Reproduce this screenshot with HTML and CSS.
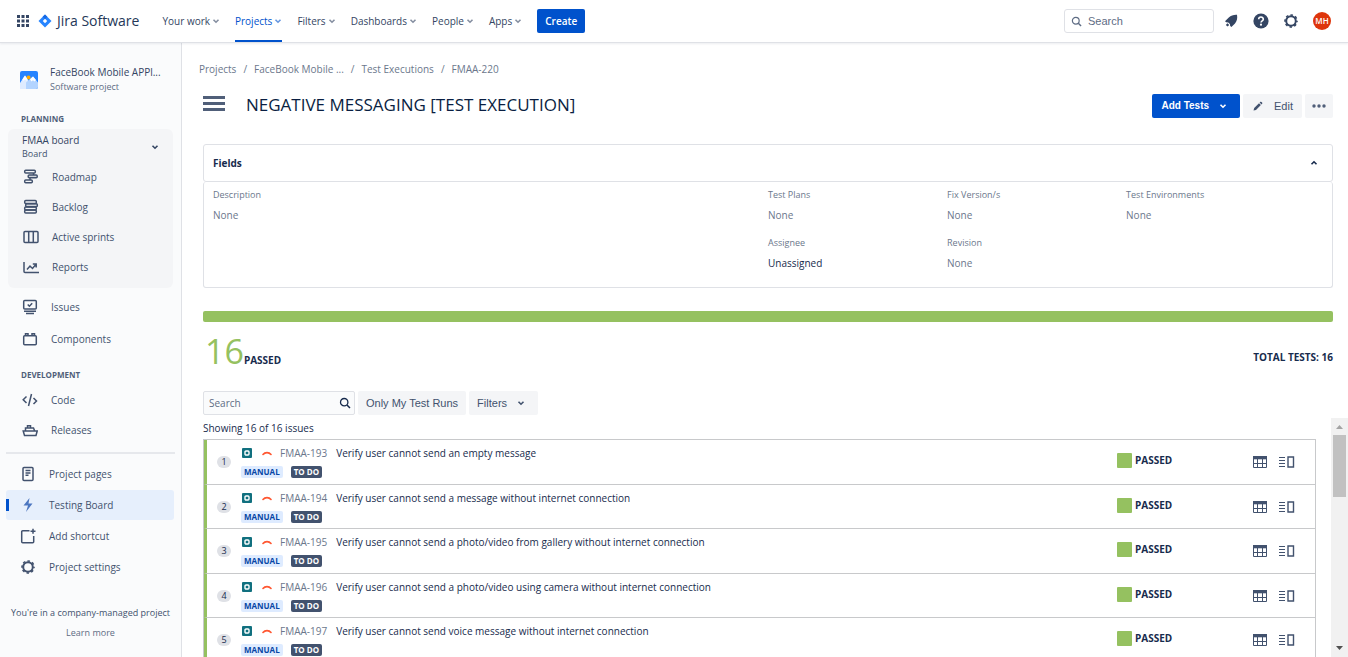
FILE: index.html
```
<!DOCTYPE html>
<html lang="en">
<head>
<meta charset="utf-8">
<title>NEGATIVE MESSAGING [TEST EXECUTION] - Jira Software</title>
<link rel="stylesheet" href="styles.css">
</head>
<body>
<svg class="sprite" aria-hidden="true">
  <symbol id="chev" viewBox="0 0 8 8"><path d="M1.500 2.700 4 5.200l2.500-2.500" fill="none" stroke="currentColor" stroke-width="1.600"/></symbol>
  <symbol id="gear" viewBox="0 0 16 16"><circle cx="8" cy="8" r="4.800" fill="none" stroke="currentColor" stroke-width="2"/><circle cx="8" cy="8" r="6" fill="none" stroke="currentColor" stroke-width="1.600" stroke-dasharray="2.500 2.210" stroke-dashoffset="1.250"/></symbol>
  <symbol id="lens" viewBox="0 0 12 12"><circle cx="5.200" cy="5.200" r="3.700" fill="none" stroke="currentColor" stroke-width="1.300"/><path d="m8 8 3 3" stroke="currentColor" stroke-width="1.500"/></symbol>
  <symbol id="test" viewBox="0 0 10 10"><rect width="10" height="10" rx="1" fill="#11707f"/><rect x="3" y="3" width="4" height="4" rx="1" fill="none" stroke="#fff" stroke-width="1.400"/></symbol>
  <symbol id="prio" viewBox="0 0 10 6"><path d="M1 4.500C3 2 7 2 9 4.500" fill="none" stroke="#ff5630" stroke-width="1.600" stroke-linecap="round"/></symbol>
  <symbol id="grid" viewBox="0 0 16 12"><path d="M1 0h14v4H1z" fill="currentColor"/><path d="M1.500 .5h13v11h-13zM1 7.500h14M5.500 3v8M10.500 3v8" fill="none" stroke="currentColor"/><path d="M2 3.500h3M6 3.500h4M11 3.500h3" stroke="#fff" stroke-opacity=".7"/></symbol>
  <symbol id="detail" viewBox="0 0 16 12"><path d="M0 1.500h6M0 4.500h6M0 7.500h6M0 10.500h6" stroke="currentColor" stroke-width="1.200"/><path d="M9 1h5.500v10H9z" fill="none" stroke="currentColor" stroke-width="1.400"/></symbol>
</svg>

<header class="topbar">
  <button class="icon-btn" aria-label="Switch to"><svg width="14" height="14" viewBox="0 0 14 14" fill="#344563"><path d="M1 1h3v3H1zM5.500 1h3v3h-3zM10 1h3v3h-3zM1 5.500h3v3H1zM5.500 5.500h3v3h-3zM10 5.500h3v3h-3zM1 10h3v3H1zM5.500 10h3v3h-3zM10 10h3v3h-3z"/></svg></button>
  <a class="brand" href="#"><svg width="14" height="14" viewBox="0 0 14 14"><path d="M7 .5 13.500 7 7 13.500.5 7z" fill="#2684ff"/><path d="M7 .5 9.300 2.800 7 5.200 4.700 2.800z" fill="#1668e3"/><path d="M7 4.800 9.200 7 7 9.200 4.800 7z" fill="#fff"/></svg>Jira Software</a>
  <nav class="topnav">
    <button>Your work<svg><use href="#chev"/></svg></button>
    <button class="current">Projects<svg><use href="#chev"/></svg></button>
    <button>Filters<svg><use href="#chev"/></svg></button>
    <button>Dashboards<svg><use href="#chev"/></svg></button>
    <button>People<svg><use href="#chev"/></svg></button>
    <button>Apps<svg><use href="#chev"/></svg></button>
  </nav>
  <button class="create">Create</button>
  <label class="topsearch"><svg width="11" height="11"><use href="#lens"/></svg><input type="search" placeholder="Search" aria-label="Search Jira"></label>
  <div class="tools">
    <button class="icon-btn" aria-label="Notifications"><svg width="16" height="16" viewBox="0 0 16 16" fill="#344563"><path d="M14 1.800c-3.200-.2-6 .6-8.200 2.600L2 8.200l1.200 1 2 .2 1.700 1.700.3 2 1.200 1 3.600-3.600C14 8.200 14.600 5 14 1.800z"/><path d="M4.500 10.200 6.200 12l-1.600 1.600-1.800-1.700z"/></svg></button>
    <button class="icon-btn" aria-label="Help"><svg width="16" height="16" viewBox="0 0 16 16"><circle cx="8" cy="8" r="7.600" fill="#344563"/><path d="M5.700 6.300C5.700 3.300 10.300 3.300 10.300 6.200 10.300 7.900 8 7.800 8 9.600" fill="none" stroke="#fff" stroke-width="1.600"/><circle cx="8" cy="11.700" r="1.100" fill="#fff"/></svg></button>
    <button class="icon-btn" aria-label="Settings"><svg width="16" height="16"><use href="#gear"/></svg></button>
    <button class="avatar" aria-label="Profile">MH</button>
  </div>
</header>

<div class="shell">
  <aside class="side">
    <div class="project">
      <svg width="18" height="18" viewBox="0 0 18 18"><rect width="18" height="18" rx="2" fill="#2684ff"/><circle cx="8.500" cy="6.500" r="2" fill="#ffab00"/><path d="M0 12 5 4.500l5 7.500v6H0z" fill="#deebff"/><path d="M6 18v-6.500L13 5.500l5 6V16a2 2 0 0 1-2 2z" fill="#b3d4ff"/><path d="m5 4.500 2.500 4-1.200 1.200L5 8.500l-1.300 1.200L2.300 8.500zM13 5.500l3 3.500-1.500 1.500-1.500-1.300-1.600 1.300L10 8.200z" fill="#fff"/></svg>
      <div><div class="project-name">FaceBook Mobile APPl...</div><div class="project-type">Software project</div></div>
    </div>
    <h2 class="side-label">PLANNING</h2>
    <div class="board">
      <button class="board-head"><span>FMAA board<small>Board</small></span><svg width="8" height="8"><use href="#chev"/></svg></button>
      <a class="item" href="#"><svg viewBox="0 0 16 16"><rect x="1.700" y="1.200" width="10.600" height="2.800" rx="1"/><rect class="tint" x="5.200" y="6" width="9" height="2.800" rx="1"/><rect x="1.700" y="11" width="7.600" height="2.800" rx="1"/><path d="M10.500 4v2M7 9v2"/></svg>Roadmap</a>
      <a class="item" href="#"><svg viewBox="0 0 16 16"><rect x="1.700" y="1.500" width="11.600" height="3" rx="1"/><rect class="tint" x="2.700" y="4.700" width="11.600" height="3" rx="1"/><rect x="1.700" y="7.900" width="11.600" height="3" rx="1"/><rect x="1.700" y="11" width="11.600" height="3" rx="1"/></svg>Backlog</a>
      <a class="item" href="#"><svg viewBox="0 0 16 16"><rect x="1" y="2.500" width="14" height="11" rx="1"/><path d="M5.700 2.500v11M10.300 2.500v11"/></svg>Active sprints</a>
      <a class="item" href="#"><svg viewBox="0 0 16 16"><path d="M1 3v9.500a1 1 0 0 0 1 1h14M4 10.500 7 7l2.500 2.500L13 5.300M9.800 5h3.400v3.500"/></svg>Reports</a>
    </div>
    <div class="group mid">
      <a class="item" href="#"><svg viewBox="0 0 16 16"><rect x="1.700" y="1.500" width="12.600" height="8.500" rx="1"/><path d="m5.700 5.500 1.700 1.700 2.800-3M2 12.200h12M4 14.500h8"/></svg>Issues</a>
      <a class="item" href="#"><svg viewBox="0 0 16 16"><rect x="1.700" y="4.700" width="12.600" height="9" rx="1"/><path d="M3.500 4.500V2.700H6v1.800M10 4.500V2.700h2.500v1.800"/></svg>Components</a>
    </div>
    <h2 class="side-label dev">DEVELOPMENT</h2>
    <div class="group">
      <a class="item" href="#"><svg viewBox="0 0 16 16"><path d="M4.500 4.500 1.200 7.700 4.500 11M11.500 6l3 3-3 3M9.500 2 6.500 14"/></svg>Code</a>
      <a class="item" href="#"><svg viewBox="0 0 16 16"><path d="M1.200 9h14L14 13.500H2.500zM3.500 8.500V6h8L12.500 8.500M5.500 5.800V3.700h3v2"/></svg>Releases</a>
    </div>
    <hr>
    <div class="group pages">
      <a class="item" href="#"><svg viewBox="0 0 16 16"><rect x="3" y="1.500" width="10" height="13" rx="1"/><path d="M5.500 4.500h5M5.500 7h5M5.500 9.200h3"/></svg>Project pages</a>
      <a class="item active" href="#"><svg viewBox="0 0 16 16"><path d="M9.500 1 3.500 8.500H8L6 15 12.500 6.500H8.500z" fill="#4c76c0" stroke="none"/></svg>Testing Board</a>
      <a class="item" href="#"><svg viewBox="0 0 16 16"><path d="M9.500 2.700H2.700a1 1 0 0 0-1 1v10a1 1 0 0 0 1 1h10a1 1 0 0 0 1-1V8M13 .8v5M10.500 3.300h5"/></svg>Add shortcut</a>
      <a class="item" href="#"><svg class="plain"><use href="#gear"/></svg>Project settings</a>
    </div>
    <footer class="side-foot"><p>You're in a company-managed project</p><a href="#">Learn more</a></footer>
  </aside>

  <main class="main">
    <nav class="crumbs" aria-label="Breadcrumb"><a href="#">Projects</a><i>/</i><a href="#">FaceBook Mobile ...</a><i>/</i><a href="#">Test Executions</a><i>/</i><a href="#">FMAA-220</a></nav>
    <div class="titlebar">
      <button class="icon-btn menu" aria-label="Menu"><svg width="22" height="16" viewBox="0 0 22 16" fill="#505f79"><path d="M0 0h22v3H0zM0 6h22v3H0zM0 12h22v3H0z"/></svg></button>
      <h1>NEGATIVE MESSAGING [TEST EXECUTION]</h1>
      <div class="actions">
        <button class="btn primary">Add Tests<svg width="8" height="8"><use href="#chev"/></svg></button>
        <button class="btn edit"><svg width="10" height="10" viewBox="0 0 10 10" fill="#42526e"><path d="M.5 9.500 1.200 7 6 2.200l1.900 1.900L3 8.900zM6.600 1.600l.8-.8c.8-.6 2.500 1 1.900 1.800l-.8.9z"/></svg>Edit</button>
        <button class="btn more" aria-label="More"><svg width="14" height="4" viewBox="0 0 14 4" fill="#505f79"><circle cx="2" cy="2" r="1.700"/><circle cx="7" cy="2" r="1.700"/><circle cx="12" cy="2" r="1.700"/></svg></button>
      </div>
    </div>

    <section class="panel">
      <button class="panel-head">Fields<svg class="up" width="8" height="8"><use href="#chev"/></svg></button>
      <dl class="fields">
        <div class="tall"><dt>Description</dt><dd>None</dd></div>
        <div><dt>Test Plans</dt><dd>None</dd></div>
        <div><dt>Fix Version/s</dt><dd>None</dd></div>
        <div><dt>Test Environments</dt><dd>None</dd></div>
        <div><dt>Assignee</dt><dd class="dark">Unassigned</dd></div>
        <div><dt>Revision</dt><dd>None</dd></div>
      </dl>
    </section>

    <div class="progress"></div>
    <div class="summary"><div class="count"><span>16</span><b>PASSED</b></div><b class="total">TOTAL TESTS: 16</b></div>

    <div class="filters">
      <label class="find"><input type="text" placeholder="Search" aria-label="Search tests"><svg width="12" height="12"><use href="#lens"/></svg></label>
      <button class="btn">Only My Test Runs</button>
      <button class="btn drop">Filters<svg width="8" height="8"><use href="#chev"/></svg></button>
    </div>

    <div class="results">
      <div class="results-body">
        <p class="showing">Showing 16 of 16 issues</p>
        <ul class="tests">
          <li><span class="num">1</span><div class="info"><div class="line"><svg width="10" height="10"><use href="#test"/></svg><svg width="10" height="6"><use href="#prio"/></svg><a href="#">FMAA-193</a><span>Verify user cannot send an empty message</span></div><div class="tags"><span class="tag">MANUAL</span><span class="tag todo">TO DO</span></div></div><div class="status">PASSED</div><div class="row-tools"><button class="icon-btn" aria-label="Grid"><svg width="16" height="12"><use href="#grid"/></svg></button><button class="icon-btn" aria-label="Details"><svg width="16" height="12"><use href="#detail"/></svg></button></div></li>
          <li><span class="num">2</span><div class="info"><div class="line"><svg width="10" height="10"><use href="#test"/></svg><svg width="10" height="6"><use href="#prio"/></svg><a href="#">FMAA-194</a><span>Verify user cannot send a message without internet connection</span></div><div class="tags"><span class="tag">MANUAL</span><span class="tag todo">TO DO</span></div></div><div class="status">PASSED</div><div class="row-tools"><button class="icon-btn" aria-label="Grid"><svg width="16" height="12"><use href="#grid"/></svg></button><button class="icon-btn" aria-label="Details"><svg width="16" height="12"><use href="#detail"/></svg></button></div></li>
          <li><span class="num">3</span><div class="info"><div class="line"><svg width="10" height="10"><use href="#test"/></svg><svg width="10" height="6"><use href="#prio"/></svg><a href="#">FMAA-195</a><span>Verify user cannot send a photo/video from gallery without internet connection</span></div><div class="tags"><span class="tag">MANUAL</span><span class="tag todo">TO DO</span></div></div><div class="status">PASSED</div><div class="row-tools"><button class="icon-btn" aria-label="Grid"><svg width="16" height="12"><use href="#grid"/></svg></button><button class="icon-btn" aria-label="Details"><svg width="16" height="12"><use href="#detail"/></svg></button></div></li>
          <li><span class="num">4</span><div class="info"><div class="line"><svg width="10" height="10"><use href="#test"/></svg><svg width="10" height="6"><use href="#prio"/></svg><a href="#">FMAA-196</a><span>Verify user cannot send a photo/video using camera without internet connection</span></div><div class="tags"><span class="tag">MANUAL</span><span class="tag todo">TO DO</span></div></div><div class="status">PASSED</div><div class="row-tools"><button class="icon-btn" aria-label="Grid"><svg width="16" height="12"><use href="#grid"/></svg></button><button class="icon-btn" aria-label="Details"><svg width="16" height="12"><use href="#detail"/></svg></button></div></li>
          <li><span class="num">5</span><div class="info"><div class="line"><svg width="10" height="10"><use href="#test"/></svg><svg width="10" height="6"><use href="#prio"/></svg><a href="#">FMAA-197</a><span>Verify user cannot send voice message without internet connection</span></div><div class="tags"><span class="tag">MANUAL</span><span class="tag todo">TO DO</span></div></div><div class="status">PASSED</div><div class="row-tools"><button class="icon-btn" aria-label="Grid"><svg width="16" height="12"><use href="#grid"/></svg></button><button class="icon-btn" aria-label="Details"><svg width="16" height="12"><use href="#detail"/></svg></button></div></li>
        </ul>
      </div>
      <div class="scroll" aria-hidden="true"><svg width="9" height="17" viewBox="0 0 9 17"><path d="M1 11h7L4.500 7z" fill="#a3a3a3"/></svg><div class="thumb"></div><svg class="down" width="9" height="17" viewBox="0 0 9 17"><path d="M1 6h7L4.500 10z" fill="#505050"/></svg></div>
    </div>
  </main>
</div>
</body>
</html>
```
FILE: styles.css
```
* { box-sizing: border-box; margin: 0; padding: 0; }
body {
  height: 100vh;
  display: flex;
  flex-direction: column;
  overflow: hidden;
  background: #fff;
  color: #172b4d;
  font: 10px/14px "Open Sans", sans-serif;
}
a { color: inherit; text-decoration: none; }
button, input { font: inherit; color: inherit; border: 0; background: none; }
button { cursor: pointer; }
svg { flex: none; display: block; }
ul { list-style: none; }
.sprite { position: absolute; width: 0; height: 0; }
.icon-btn { display: flex; align-items: center; justify-content: center; }

/* Top bar */
.topbar {
  height: 43px;
  flex: none;
  display: flex;
  align-items: center;
  padding: 0 17px 0 16px;
  border-bottom: 1px solid #dfe1e6;
  box-shadow: 0 1px 2px #091e4214;
  color: #344563;
  z-index: 1;
}
.brand {
  display: flex;
  align-items: center;
  gap: 5px;
  margin: 0 23px 0 8px;
  font-size: 14px;
  line-height: 20px;
  color: #253858;
}
.topnav { display: flex; align-self: stretch; gap: 15px; }
.topnav button { display: flex; align-items: center; gap: 2px; white-space: nowrap; border-bottom: 2px solid transparent; border-top: 2px solid transparent; }
.topnav svg { width: 8px; height: 8px; opacity: .6; }
.topnav .current { color: #0052cc; border-bottom-color: #0052cc; }
.create {
  height: 24px;
  padding: 0 8px;
  margin-left: 15px;
  border-radius: 2px;
  background: #0052cc;
  color: #fff;
  font-weight: 600;
}
.topsearch {
  width: 150px;
  height: 24px;
  display: flex;
  align-items: center;
  gap: 6px;
  margin-left: auto;
  padding: 0 6px;
  border: 1px solid #dfe1e6;
  border-radius: 3px;
  color: #5e6c84;
}
.topsearch input { width: 100%; min-width: 0; outline: 0; font: 11px/14px "Liberation Sans", sans-serif; }
.tools { display: flex; align-items: center; gap: 14px; margin-left: 9px; }
.avatar { width: 18px; height: 18px; border-radius: 50%; background: #de350b; color: #fff; font-size: 8px; font-weight: 600; }
::placeholder { color: #5e6c84; opacity: 1; }

/* Sidebar */
.shell { flex: 1; min-height: 0; display: grid; grid-template-columns: 182px 1fr; }
.side { background: #fafbfc; border-right: 1px solid #dfe1e6; padding: 22px 8px 0; color: #42526e; overflow: hidden; }
.project { display: flex; align-items: center; gap: 12px; padding-left: 12px; white-space: nowrap; }
.project-name { line-height: 15px; color: #344563; }
.project-type { font-size: 9px; color: #5e6c84; }
.side-label { font-size: 8px; font-weight: 700; line-height: 14px; padding-left: 13px; margin: 18px 0 3px; color: #505f79; }
.board { border-radius: 6px; background: #f4f5f7; padding-bottom: 6px; }
.board-head { width: 100%; height: 33px; display: flex; align-items: center; justify-content: space-between; padding: 2px 14px 0; text-align: left; color: #344563; }
.board-head small { display: block; font-size: 9px; color: #42526e; }
.item { height: 30px; display: flex; align-items: center; gap: 13px; padding-left: 15px; }
.item svg { width: 16px; height: 16px; fill: none; stroke: #42526e; stroke-width: 1.5px; }
.item svg.plain { stroke: none; }
.item .tint { fill: #42526e33; }
.group { display: flex; flex-direction: column; }
.group .item { padding-left: 14px; }
.mid { gap: 2px; margin-top: 4px; }
.dev { margin: 14px 0 3px; }
.side hr { margin: 7px -2px 5px; border: 0; border-top: 2px solid #e6e8ec; }
.pages { gap: 1px; margin: 0 -1px 0 -2px; }
.pages .item { border-radius: 3px; }
.pages .active {
  background: linear-gradient(#0052cc, #0052cc) 0 50% / 3px 12px no-repeat #e6effc;
}
.side-foot { margin: 24px -8px 0; font-size: 9px; text-align: center; white-space: nowrap; }
.side-foot a { display: block; margin-top: 6px; color: #5e6c84; }

/* Main column */
.main { min-width: 0; display: flex; flex-direction: column; padding-top: 19px; overflow: hidden; }
.crumbs { display: flex; gap: 7px; padding-left: 17px; color: #6b778c; }
.crumbs i { font-style: normal; }
.titlebar { display: flex; align-items: center; margin: 18px 15px 26px 21px; }
.menu { padding-bottom: 4px; }
h1 { margin-left: 21px; padding-bottom: 2px; font-size: 17px; line-height: 22px; font-weight: 500; color: #091e42; white-space: nowrap; }
.actions { display: flex; gap: 3px; margin-left: auto; }
.btn {
  height: 24px;
  display: flex;
  align-items: center;
  padding: 0 8px;
  border-radius: 2px;
  background: #f4f5f7;
  color: #42526e;
  font: 11px/14px "Liberation Sans", sans-serif;
  white-space: nowrap;
}
.btn.primary { gap: 10px; padding: 0 13px 0 9px; background: #0052cc; color: #fff; font-size: 10px; font-weight: 700; }
.btn.edit { gap: 11px; padding: 0 9px 0 10px; }
.btn.more { padding: 0 7px; }
.btn.drop { gap: 10px; padding-right: 13px; }
.panel { margin: 0 15px 0 21px; }
.panel-head {
  width: 100%;
  height: 38px;
  display: flex;
  align-items: center;
  justify-content: space-between;
  padding: 0 14px 0 9px;
  border: 1px solid #dfe1e6;
  border-radius: 3px;
  font-weight: 700;
}
.up { transform: rotate(180deg); }
.fields {
  display: grid;
  grid-template-columns: 62fr 20fr 20fr 23fr;
  row-gap: 14px;
  padding: 6px 0 17px 9px;
  border: 1px solid #dfe1e6;
  border-top: 0;
  border-radius: 3px;
  color: #6b778c;
}
.tall { grid-row: span 2; }
dt { font-size: 9px; }
dd { margin-top: 6px; }
.dark { color: #172b4d; }
.progress { flex: none; height: 11px; margin: 23px 15px 0 21px; border-radius: 2px; background: #95c160; }
.summary { display: flex; justify-content: space-between; align-items: flex-end; margin: 12px 15px 23px 23px; }
.count { display: flex; align-items: baseline; }
.count span { font-size: 34px; line-height: 34px; color: #95c160; }
.total { padding-bottom: 4px; }
.filters { display: flex; gap: 3px; padding-left: 21px; }
.find {
  width: 152px;
  height: 24px;
  display: flex;
  align-items: center;
  padding: 0 3px 0 5px;
  border: 1px solid #dfe1e6;
  border-radius: 2px;
  background: #fafbfc;
}
.find input { flex: 1; min-width: 0; outline: 0; }

/* Results */
.results { flex: 1; min-height: 0; display: flex; margin-top: 3px; }
.results-body { flex: 1; min-width: 0; overflow: hidden; padding: 3px 15px 0 21px; }
.tests { margin-top: 4px; border: 1px solid #c8c9cb; }
.tests li {
  height: 45px;
  display: grid;
  grid-template-columns: 34px 1fr 135px 63px;
  border-left: 3px solid #95c160;
  border-bottom: 1px solid #c8c9cb;
}
.tests li:nth-child(even) { height: 44px; }
.num { width: 14px; height: 12px; margin: 16px 0 0 10px; border-radius: 6px; background: #dfe1e6; font-size: 9px; line-height: 12px; text-align: center; }
.info { padding-top: 6px; }
.line { display: flex; align-items: center; white-space: nowrap; padding-left: 1px; }
.line svg { margin-right: 10px; }
.line svg + svg { margin-right: 8px; }
.line a { color: #6b778c; margin-right: 9px; }
.tags { display: flex; gap: 8px; margin-top: 6px; }
.tag { padding: 0 3px; border-radius: 2px; background: #deebff; color: #0747a6; font-size: 8px; line-height: 12px; font-weight: 700; }
.todo { background: #42526e; color: #fff; }
.status { display: flex; gap: 3px; padding-top: 13px; font-weight: 700; }
.status::before { content: ""; width: 15px; height: 15px; background: #95c160; border-radius: 1px; }
.row-tools { display: flex; align-items: flex-start; gap: 11px; padding-top: 16px; color: #42526e; }
.scroll { width: 17px; display: flex; flex-direction: column; align-items: center; background: #f1f1f1; }
.thumb { width: 13px; height: 62px; background: #c1c1c1; }
.down { margin-top: auto; }
```
